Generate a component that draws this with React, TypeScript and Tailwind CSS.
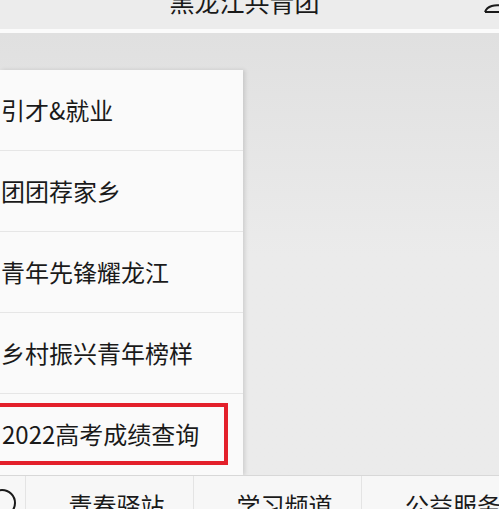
const items = ['引才&就业', '团团荐家乡', '青年先锋耀龙江', '乡村振兴青年榜样']

const tabs = ['青春驿站', '学习频道', '公益服务']

export default function App() {
  return (
    <div
      className="flex h-[509px] w-[499px] flex-col overflow-hidden bg-[#ebebeb] text-[#1a1a1a]"
      style={{ fontFamily: '"Noto Sans CJK SC", "Noto Sans", sans-serif' }}
    >
      {/* header, cut at the top */}
      <div className="relative h-[29px] shrink-0 bg-[#ececec]">
        <div className="-mt-[15px] text-center text-[25px] leading-[32px]">
          <span className="relative left-[-5px]">黑龙江共青团</span>
        </div>
        <svg className="absolute right-[-6px] top-[-6px]" width="22" height="20" viewBox="0 0 22 20" fill="none" stroke="#1a1a1a" strokeWidth="2">
          <path d="M2 18 C 4 12, 12 10, 20 12" />
          <path d="M2 18 H 22" />
        </svg>
      </div>
      <div className="h-[4px] shrink-0 bg-[#fbfbfb]" />

      {/* content area */}
      <div className="flex min-h-0 flex-1 flex-col bg-gradient-to-b from-[#e0e0e0] via-[#ebebeb] to-[#ebebeb] pt-[37px]">
        <div className="w-[243px] shrink-0 bg-[#fafafa] shadow-[2px_0_4px_rgba(0,0,0,0.12)]">
          {items.map((t) => (
            <div key={t} className="flex h-[81px] items-center border-b border-[#e6e6e6] pl-[1px] text-[24px]">
              {t}
            </div>
          ))}
          <div className="flex h-[81px] items-center pb-[2px]">
            <div className="-ml-[4px] flex h-[62px] w-[232px] items-center border-[4px] border-[#e3202b] pl-[2px] text-[24px]">
              2022高考成绩查询
            </div>
          </div>
        </div>
        <div className="flex-1" />
      </div>

      {/* bottom menu, cut at the bottom */}
      <div className="flex h-[34px] shrink-0 items-stretch border-t border-[#d8d8d8] bg-[#f7f7f7]">
        <div className="relative w-[26px] shrink-0 border-r border-[#e4e4e4]">
          <div className="absolute left-[-12px] top-[13px] h-[28px] w-[28px] rounded-full border-2 border-[#1a1a1a]" />
        </div>
        {tabs.map((t, i) => (
          <div
            key={t}
            className={`flex w-[168px] shrink-0 justify-center overflow-hidden pl-[14px] pt-[15px] text-[24px] leading-[28px] ${i < 2 ? 'border-r border-[#e4e4e4]' : ''}`}
          >
            {t}
          </div>
        ))}
      </div>
    </div>
  )
}
